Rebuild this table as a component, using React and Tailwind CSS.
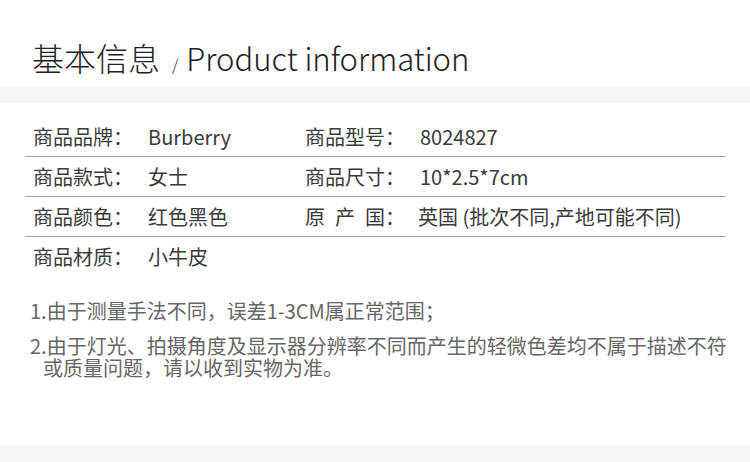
const ROWS = [
  [
    { label: "商品品牌：", value: "Burberry" },
    { label: "商品型号：", value: "8024827" },
  ],
  [
    { label: "商品款式：", value: "女士" },
    { label: "商品尺寸：", value: "10*2.5*7cm" },
  ],
  [
    { label: "商品颜色：", value: "红色黑色" },
    { label: "原产国：", spaced: true, value: "英国 (批次不同,产地可能不同)" },
  ],
  [{ label: "商品材质：", value: "小牛皮" }],
];

function Label({ item }) {
  if (item.spaced) {
    return (
      <span className="flex w-[113px] shrink-0">
        <span className="flex w-[80px] justify-between">
          <span>原</span>
          <span>产</span>
          <span>国</span>
        </span>
        <span>：</span>
      </span>
    );
  }
  return <span className="w-[115px] shrink-0">{item.label}</span>;
}

export default function App() {
  return (
    <div
      className="flex h-[462px] w-[750px] flex-col bg-white text-[#3a3a3a]"
      style={{ fontFamily: '"Noto Sans CJK SC", "Noto Sans", sans-serif' }}
    >
      {/* Title */}
      <div className="flex h-[87px] items-baseline pl-[32px] pt-[41px]">
        <span className="text-[32px] font-light leading-none text-[#222]">基本信息</span>
        <span className="ml-[12px] text-[16px] font-light leading-none text-[#222]">/</span>
        <span className="ml-[8px] text-[31px] font-light leading-none text-[#222]">
          Product information
        </span>
      </div>
      <div className="h-[16px] bg-[#f7f7f7]" />

      {/* Table */}
      <div className="px-[25px] pt-[14px]">
        {ROWS.map((row, i) => (
          <div
            key={i}
            className={`flex h-[40px] items-center text-[20px] ${
              i < ROWS.length - 1 ? "border-b border-[#a3a3a3]" : ""
            }`}
          >
            {row.map((item) => (
              <div key={item.label} className="flex w-[272px] pl-[8px] whitespace-nowrap">
                <Label item={item} />
                <span>{item.value}</span>
              </div>
            ))}
          </div>
        ))}
      </div>

      {/* Notes */}
      <div className="mt-[23px] flex flex-col gap-[13px] pl-[30px] text-[20px] leading-[22px] text-[#666]">
        <p className="whitespace-nowrap">1.由于测量手法不同，误差1-3CM属正常范围；</p>
        <p className="whitespace-nowrap pl-[13px] -indent-[13px]">
          2.由于灯光、拍摄角度及显示器分辨率不同而产生的轻微色差均不属于描述不符
          <br />
          或质量问题，请以收到实物为准。
        </p>
      </div>

      <div className="flex-1" />
      <div className="h-[17px] bg-[#f7f7f7]" />
    </div>
  );
}
